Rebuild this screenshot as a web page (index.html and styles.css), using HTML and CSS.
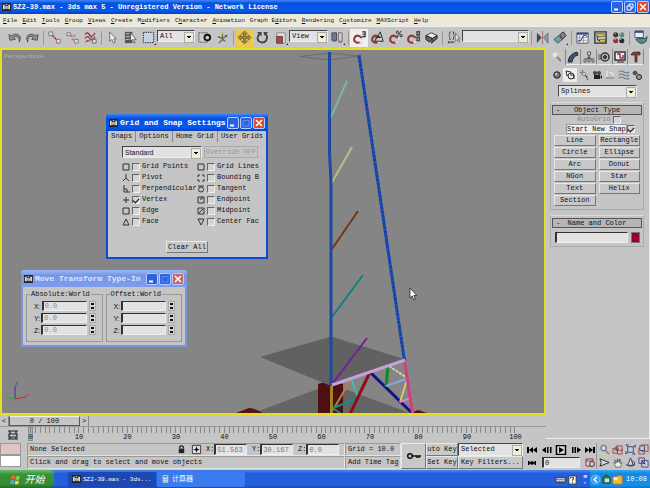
FILE: index.html
```html
<!DOCTYPE html>
<html lang="en">
<head>
  <meta charset="UTF-8" />
  <title>SZ2-39.max - 3ds max 5</title>
  <link rel="stylesheet" href="styles.css">
</head>
<body>
  <svg width="0" height="0" class="defs">
    <symbol id="app" viewBox="0 0 10 9">
      <rect width="10" height="9" fill="#222"/><path d="M1 2h2v5H1zM7 2h2v5H7zM4 1h2v1H4z" fill="#ddd"/><circle cx="5" cy="5" r="1.6" fill="#9ab" stroke="#eee" stroke-width=".6"/>
    </symbol>
    <symbol id="magnet" viewBox="0 0 16 16">
      <path d="M10.500 13L5.500 13.500Q1.500 12.500 2.500 8.500Q4 5 8 6.500L12 9.500" fill="none" stroke="#8c3a38" stroke-width="2.200"/><path d="M8 13.300l2.500-.3M10.500 8.300l1.800 1.400" stroke="#eee" stroke-width="2.400"/>
    </symbol>
    <symbol id="min" viewBox="0 0 10 10"><path d="M2 7.500h4" stroke="#fff" stroke-width="2"/></symbol>
    <symbol id="max" viewBox="0 0 10 10"><path d="M2 2.500h6v5.500H2z" fill="none" stroke="#5c8cf0"/></symbol>
    <symbol id="restore" viewBox="0 0 10 10"><path d="M4 4V2h4v4H6M2 4h4v4H2z" fill="none" stroke="#fff"/></symbol>
    <symbol id="close" viewBox="0 0 10 10"><path d="M2 2l6 6M8 2l-6 6" stroke="#fff" stroke-width="1.500"/></symbol>
  </svg>

  <header class="titlebar">
    <svg class="app-icon"><use href="#app"/></svg>
    <h1>SZ2-39.max - 3ds max 5 - Unregistered Version - Network License</h1>
    <div class="win-buttons">
      <button aria-label="Minimize"><svg><use href="#min"/></svg></button>
      <button aria-label="Restore"><svg><use href="#restore"/></svg></button>
      <button class="close" aria-label="Close"><svg><use href="#close"/></svg></button>
    </div>
  </header>

  <nav class="menubar">
    <button><u>F</u>ile</button>
    <button><u>E</u>dit</button>
    <button><u>T</u>ools</button>
    <button><u>G</u>roup</button>
    <button><u>V</u>iews</button>
    <button><u>C</u>reate</button>
    <button>M<u>o</u>difiers</button>
    <button>C<u>h</u>aracter</button>
    <button><u>A</u>nimation</button>
    <button>Graph E<u>d</u>itors</button>
    <button><u>R</u>endering</button>
    <button>C<u>u</u>stomize</button>
    <button><u>M</u>AXScript</button>
    <button><u>H</u>elp</button>
  </nav>

  <div class="toolbar">
    <button aria-label="Undo"><svg viewBox="0 0 16 16"><path d="M2 5l1 6 6-1-2-2q4-3 6 2v3q3-6-1-8-4-2-7 1z" fill="#8c9088" stroke="#333" stroke-width=".7"/></svg></button>
    <button aria-label="Redo"><svg viewBox="0 0 16 16"><path d="M14 5l-1 6-6-1 2-2Q5 5 3 10v3Q0 7 4 5q4-2 7 1z" fill="#8c9088" stroke="#333" stroke-width=".7"/></svg></button>
    <i class="sep"></i>
    <button aria-label="Link"><svg viewBox="0 0 16 16"><path d="M4 4l8 8" stroke="#b23540" stroke-width="2" stroke-dasharray="2 1"/><path d="M2 2h4v4H2zM10 10h4v4h-4z" fill="#ddd" stroke="#777"/></svg></button>
    <button aria-label="Unlink"><svg viewBox="0 0 16 16"><path d="M6 6l2 1M11 5l-2 2M7 11l2-2" stroke="#c0606a" stroke-width="1.300"/><path d="M2 3h4v3H2zM10 10h4v4h-4z" fill="#ddd" stroke="#777"/></svg></button>
    <button aria-label="Bind"><svg viewBox="0 0 16 16"><path d="M2 5q3-4 5 0t6-2M2 9q3-4 5 0t6-2M3 13q2-3 4-1" fill="none" stroke="#a83844" stroke-width="1.300"/><path d="M4 2l7 9" stroke="#555"/><path d="M10 10h4v4h-4z" fill="#ddd" stroke="#666"/></svg></button>
    <i class="sep"></i>
    <button aria-label="Select"><svg viewBox="0 0 16 16"><path d="M5 2v10l2.500-2L9 14l2-1-1.500-3.500H12z" fill="#eee" stroke="#555" stroke-width=".8"/></svg></button>
    <button aria-label="Select by name"><svg viewBox="0 0 16 16"><path d="M2 2h8v12H2z" fill="#555"/><path d="M3 4h4M3 7h4M3 10h4" stroke="#ccc"/><path d="M8 3v9l2-2 1.500 4 1.500-.5L11.500 10H14z" fill="#eee" stroke="#444" stroke-width=".7"/></svg></button>
    <button aria-label="Region"><svg viewBox="0 0 16 16"><path d="M2.500 2.500h11v11h-11z" fill="#c4d4e2" stroke="#222" stroke-dasharray="1.500 1"/><path d="M14 16h2v-2z" fill="#111"/></svg></button>
    <span class="dd filter"><select aria-label="Selection filter"><option>All</option></select></span>
    <button aria-label="Crossing"><svg viewBox="0 0 16 16"><path d="M2 3h9v10H2z" fill="#ccc" stroke="#222" stroke-dasharray="1 1"/><circle cx="11" cy="8" r="3" fill="#ccc" stroke="#111" stroke-width="2"/></svg></button>
    <button aria-label="Manipulate"><svg viewBox="0 0 16 16"><path d="M8 3v7l-4 4M3 7l5 2 5-3M8 10l3 2" fill="none" stroke="#5c6450" stroke-width="1.300"/><circle cx="8.500" cy="3.500" r="1.300" fill="#c8c860"/><circle cx="12" cy="6" r="1" fill="#444"/></svg></button>
    <i class="sep"></i>
    <button class="active" aria-label="Move"><svg viewBox="0 0 16 16"><path d="M8 1l3 3H9v3h3V5l3 3-3 3V9H9v3h2l-3 3-3-3h2V9H4v2L1 8l3-3v2h3V4H5z" fill="#a09058" stroke="#5c4c20" stroke-width=".7"/></svg></button>
    <button aria-label="Rotate"><svg viewBox="0 0 16 16"><path d="M5 4Q1 8 4 12q5 3 8-1 2-5-1-7" fill="none" stroke="#444" stroke-width="2"/><path d="M2 2h5v5zM9 2h5l-4 4z" fill="#444"/></svg></button>
    <button aria-label="Scale"><svg viewBox="0 0 16 16"><path d="M4 3h9v11H4z" fill="#ddd" stroke="#888"/><path d="M4 7h6v7H4z" fill="#a84850" stroke="#633"/><path d="M14 16h2v-2z" fill="#111"/></svg></button>
    <span class="dd coord"><select aria-label="Coordinate system"><option>View</option></select></span>
    <button aria-label="Pivot"><svg viewBox="0 0 16 16"><path d="M2 3h5v8H2z" fill="#6c7c98" stroke="#445"/><path d="M9 3h4v9H9z" fill="#ccc" stroke="#767"/><path d="M3 12h4M9 13h4" stroke="#a55"/><path d="M14 16h2v-2z" fill="#111"/></svg></button>
    <i class="sep"></i>
    <button class="pressed" aria-label="Snap"><svg viewBox="0 0 16 16"><use href="#magnet" width="16" height="16"/><path d="M11 2h3v5h-3M11 4.500h3" fill="none" stroke="#222" stroke-width="1.200"/></svg></button>
    <button aria-label="Angle snap"><svg viewBox="0 0 16 16"><use href="#magnet" width="16" height="16"/><path d="M5 12L11 2l3 10zM5 9q3-3 7-1" fill="none" stroke="#222"/></svg></button>
    <button aria-label="Percent snap"><svg viewBox="0 0 16 16"><use href="#magnet" width="16" height="16"/><path d="M14 1l-4 6" stroke="#222"/><circle cx="10" cy="2.500" r="1.200" fill="none" stroke="#222"/><circle cx="14" cy="6" r="1.200" fill="none" stroke="#222"/></svg></button>
    <button aria-label="Spinner snap"><svg viewBox="0 0 16 16"><use href="#magnet" width="16" height="16"/><path d="M11 1h4v5h-4zM11 7h4v5h-4z" fill="#444"/><path d="M12 4l1-2 1 2zM12 9l1 2 1-2z" fill="#ddd"/></svg></button>
    <button aria-label="Override"><svg viewBox="0 0 16 16"><path d="M2 6l6-3 6 3-5 3z" fill="#eee" stroke="#333"/><path d="M2 6v4l4 3 3-4zM9 9l5-3v3l-6 5z" fill="#666" stroke="#222"/></svg></button>
    <i class="sep"></i>
    <button aria-label="Named sets"><svg viewBox="0 0 16 16"><path d="M5 2H4v3L3 6l1 1v3h1M7 2h1v3l1 1-1 1v3H7" fill="none" stroke="#444"/><path d="M2 13h7" stroke="#444" stroke-width="2" stroke-dasharray="2 1"/><path d="M10 3v9l2-2 1.500 3 1-.5L13 9h2z" fill="#ddd" stroke="#555" stroke-width=".7"/></svg></button>
    <span class="dd sets"><select aria-label="Named selection sets"><option></option></select></span>
    <i class="sep"></i>
    <button aria-label="Mirror"><svg viewBox="0 0 16 16"><path d="M2 3l5 5-5 6z" fill="#3e4a5c"/><path d="M14 3L9 8l5 6z" fill="#7aa0a8" stroke="#556" stroke-width=".6"/><path d="M8 1v14" stroke="#a66"/></svg></button>
    <button aria-label="Align"><svg viewBox="0 0 16 16"><path d="M1 10l5-4 4 4-5 4z" fill="#70a0a4" stroke="#455"/><path d="M7 5l4-3 3 4-4 4z" fill="#7c8088" stroke="#334"/><path d="M14 16h2v-2z" fill="#111"/></svg></button>
    <i class="sep"></i>
    <button aria-label="Curve editor"><svg viewBox="0 0 16 16"><path d="M2 3h12v11H2z" fill="#eee" stroke="#557"/><path d="M2 4h12" stroke="#34488c" stroke-width="2"/><path d="M5 5v9M9 5v9M3 8h10M3 11h10" stroke="#88a" stroke-width=".7"/><path d="M3 12q4 0 5-4t5-1" fill="none" stroke="#334"/></svg></button>
    <button aria-label="Schematic"><svg viewBox="0 0 16 16"><path d="M2 2h12v12H2z" fill="#ccc" stroke="#333" stroke-width="1.500"/><path d="M4 4h8v3H4zM7 10h6v3H7z" fill="#e0c840" stroke="#443" stroke-width=".7"/><path d="M5 7v4h2" fill="none" stroke="#222"/></svg></button>
    <button aria-label="Materials"><svg viewBox="0 0 16 16"><circle cx="5" cy="5" r="2.700" fill="#323638"/><circle cx="11.500" cy="5" r="2.700" fill="#5a8482"/><circle cx="5" cy="11.500" r="2.700" fill="#933338"/><circle cx="11.500" cy="11.500" r="2.700" fill="#252a30"/><path d="M4 4h1M10 4h1M4 10h1M10 10h1" stroke="#fff"/></svg></button>
    <i class="sep"></i>
    <button aria-label="Render"><svg viewBox="0 0 16 16"><path d="M2 1h9v7H2z" fill="#eee" stroke="#557"/><path d="M2 2h9" stroke="#34488c" stroke-width="2"/><path d="M5 9h8l2-2-1 5q-4 4-8 1l-3-3z" fill="#4c9490" stroke="#245"/></svg></button>
  </div>

  <main class="workspace">
    <div class="left">
      <section class="viewport">
        <svg class="scene" viewBox="0 48 546 367" preserveAspectRatio="none">
          <!-- ground planes -->
          <path d="M253 413L331 384 410 413z" fill="#646464"/>
          <path d="M236 413l13-5q8 1 14 5zM411 413l7-3 9 3z" fill="#581014"/>
          <path d="M318 384l14-4 11 4v29h-25z" fill="#4c1012"/>
          <path d="M260 357L331 336.500 404 359 331 386z" fill="#616161"/>
          <path d="M300 56.500l30-3.500 29 3-29 4z" fill="none" stroke="#666" stroke-width=".8"/>
          <g fill="none" stroke-width="2">
            <path d="M347 81l-16 36" stroke="#7db5a8"/>
            <path d="M352 147l-21 37" stroke="#bcbc80"/>
            <path d="M358 211l-26 38" stroke="#783410"/>
            <path d="M363 275l-31 42" stroke="#128080"/>
            <path d="M367 338l-34 45" stroke="#7a1c98"/>
            <path d="M329.500 52v100l1.500 30v203" stroke="#1c4aa0" stroke-width="3"/>
            <path d="M331.500 386v27" stroke="#a08420" stroke-width="3"/>
            <path d="M359 55l45.500 306" stroke="#1440ac" stroke-width="3"/>
            <path d="M359 55l45.500 306" stroke="#3060b0" stroke-dasharray="1 3"/>
            <path d="M333 410l18-31" stroke="#b88048"/>
            <path d="M351 378l7 20" stroke="#44bca8"/>
            <path d="M333 408l25-10M334 409l6 4" stroke="#128c88"/>
            <path d="M370 372l-20 42" stroke="#8a1018" stroke-width="3"/>
            <path d="M370 372l42 41" stroke="#101088" stroke-width="3"/>
            <path d="M388 366l-2 21" stroke="#108a28" stroke-width="3"/>
            <path d="M389 366l18 12" stroke="#d8d4a8" stroke-dasharray="3 1"/>
            <path d="M386 386l20-7" stroke="#80a8dc"/>
            <path d="M407 380l-7 22" stroke="#d8cc60"/>
            <path d="M400 402l11-4" stroke="#d888c8"/>
            <path d="M404.500 361l8 52" stroke="#d04080" stroke-width="3"/>
            <path d="M332 385l73-25" stroke="#c8a0d8" stroke-width="3"/>
          </g>
          <!-- axis tripod -->
          <path d="M15 399V386" stroke="#3434b0"/><path d="M15 399l11-2" stroke="#b83030"/><path d="M15 399l-6-1" stroke="#40a040"/>
          <g class="axis"><text x="15" y="385" fill="#3434b0">z</text><text x="26" y="397" fill="#b83030">x</text><text x="6" y="399" fill="#40a040">y</text></g>
          <path d="M410 288v10l2.200-2 1.600 4 1.700-.8-1.700-3.700h3z" fill="#fff" stroke="#222" stroke-width=".8"/>
        </svg>
        <span class="view-name">Perspective</span>

        <section class="dialog snaps">
          <header>
            <svg class="app-icon"><use href="#app"/></svg>
            <h2>Grid and Snap Settings</h2>
            <div class="win-buttons">
              <button aria-label="Minimize"><svg><use href="#min"/></svg></button>
              <button aria-label="Maximize"><svg><use href="#max"/></svg></button>
              <button class="close" aria-label="Close"><svg><use href="#close"/></svg></button>
            </div>
          </header>
          <div class="tabs">
            <button>Snaps</button><button>Options</button><button>Home Grid</button><button>User Grids</button>
          </div>
          <div class="snap-body">
            <div class="snap-top">
              <span class="dd"><select aria-label="Snap type"><option>Standard</option></select></span>
              <button class="override" disabled>Override OFF</button>
            </div>
            <div class="snap-grid">
              <label><svg viewBox="0 0 8 8"><path d="M1 1h6v6H1z"/></svg><input type="checkbox"><span>Grid Points</span></label>
              <label><svg viewBox="0 0 8 8"><path d="M1 1h6v6H1z"/></svg><input type="checkbox"><span>Grid Lines</span></label>
              <label><svg viewBox="0 0 8 8"><path d="M4 0v4L1 7M4 4l3 3"/></svg><input type="checkbox"><span>Pivot</span></label>
              <label><svg viewBox="0 0 8 8"><path d="M3 1H1v2M5 1h2v2M1 5v2h2M7 5v2H5"/></svg><input type="checkbox"><span>Bounding B</span></label>
              <label><svg viewBox="0 0 8 8"><path d="M2 0v7h6M2 4h3v3"/></svg><input type="checkbox"><span>Perpendicular</span></label>
              <label><svg viewBox="0 0 8 8"><path d="M1 1h6"/><circle cx="4" cy="4.500" r="2.500"/></svg><input type="checkbox"><span>Tangent</span></label>
              <label><svg viewBox="0 0 8 8"><path d="M4 1v6M1 4h6"/></svg><input type="checkbox" checked><span>Vertex</span></label>
              <label><svg viewBox="0 0 8 8"><path d="M1 1h6v6H1zM4 4V2h2"/></svg><input type="checkbox"><span>Endpoint</span></label>
              <label><svg viewBox="0 0 8 8"><path d="M1 1h6v6H1z"/></svg><input type="checkbox"><span>Edge</span></label>
              <label><svg viewBox="0 0 8 8"><path d="M1 1h6v6H1zM2 6l4-4"/></svg><input type="checkbox"><span>Midpoint</span></label>
              <label><svg viewBox="0 0 8 8"><path d="M4 1l3 6H1z"/></svg><input type="checkbox"><span>Face</span></label>
              <label><svg viewBox="0 0 8 8"><path d="M4 7L1 1h6z"/></svg><input type="checkbox"><span>Center Fac</span></label>
            </div>
            <button class="btn clear">Clear All</button>
          </div>
        </section>

        <section class="dialog inactive typein">
          <header>
            <svg class="app-icon"><use href="#app"/></svg>
            <h2>Move Transform Type-In</h2>
            <div class="win-buttons">
              <button aria-label="Minimize"><svg><use href="#min"/></svg></button>
              <button aria-label="Maximize"><svg><use href="#max"/></svg></button>
              <button class="close" aria-label="Close"><svg><use href="#close"/></svg></button>
            </div>
          </header>
          <div class="sets-row">
            <fieldset>
              <legend>Absolute:World</legend>
              <label>X:<input type="text" value="0.0"><i class="spin"></i></label>
              <label>Y:<input type="text" value="0.0"><i class="spin"></i></label>
              <label>Z:<input type="text" value="0.0"><i class="spin"></i></label>
            </fieldset>
            <fieldset>
              <legend>Offset:World</legend>
              <label>X:<input type="text"><i class="spin"></i></label>
              <label>Y:<input type="text"><i class="spin"></i></label>
              <label>Z:<input type="text"><i class="spin"></i></label>
            </fieldset>
          </div>
        </section>
      </section>

      <div class="time-slider">
        <button class="step">&lt;</button><button class="thumb">0 / 100</button><button class="step">&gt;</button>
      </div>
      <div class="trackbar">
        <button class="curve" aria-label="Open mini curve editor"><svg viewBox="0 0 12 12"><path d="M1 2h10M1 10h10M2 5h8v3H2zM3 2v3M9 2v3M3 8v2M9 8v2" fill="none" stroke="#222" stroke-width="1.200"/></svg></button>
        <div class="track">
          <i class="frame"></i>
          <div class="ticks" id="ticks"></div>
          <div class="labels" id="labels"></div>
        </div>
      </div>
    </div>

    <aside class="panel">
      <div class="panel-tabs">
        <button class="on" aria-label="Create"><svg viewBox="0 0 12 12"><path d="M5 5l5 5" stroke="#888" stroke-width="2"/><path d="M4 1v6M1 4h6M2 2l4 4M6 2L2 6" stroke="#f4f0d0"/></svg></button>
        <button aria-label="Modify"><svg viewBox="0 0 12 12"><path d="M1 11Q2 3 10 1l1 3Q6 5 5 11z" fill="#3c5674" stroke="#223"/></svg></button>
        <button aria-label="Hierarchy"><svg viewBox="0 0 12 12"><path d="M6 3v3L2 9M6 6l4 3M6 6v3" stroke="#444" fill="none"/><path d="M4.500 1h3v3h-3zM1 8h2v3H1zM5 8h2v3H5zM9 8h2v3H9z" fill="#ddd" stroke="#444" stroke-width=".8"/></svg></button>
        <button aria-label="Motion"><svg viewBox="0 0 12 12"><circle cx="7" cy="6" r="4" fill="#bbb" stroke="#333" stroke-width="1.500"/><circle cx="7" cy="6" r="1.500" fill="#933" stroke="#222"/><path d="M0 4h3M0 6h2M0 8h3" stroke="#555"/></svg></button>
        <button aria-label="Display"><svg viewBox="0 0 12 12"><path d="M1 1h10v8H1z" fill="#eee" stroke="#334" stroke-width="1.500"/><path d="M3 3h3v4M6 7h3V4" fill="none" stroke="#a23050" stroke-width="1.500"/><path d="M3 11h7" stroke="#333"/></svg></button>
        <button aria-label="Utilities"><svg viewBox="0 0 12 12"><path d="M1 4q1-3 4-3h5v3H8L7 3v8H5V4z" fill="#8a3a34" stroke="#422" stroke-width=".7"/></svg></button>
      </div>
      <div class="cats">
        <button aria-label="Geometry"><svg viewBox="0 0 12 12"><circle cx="6" cy="6" r="3.300" fill="#777" stroke="#222"/><circle cx="5" cy="5" r="1" fill="#ddd"/></svg></button>
        <button class="on" aria-label="Shapes"><svg viewBox="0 0 12 12"><circle cx="7" cy="7" r="3" fill="none" stroke="#222"/><path d="M2 2l5 1-4 4zM6 6h4v4" fill="none" stroke="#333"/></svg></button>
        <button aria-label="Lights"><svg viewBox="0 0 12 12"><path d="M2 3l4 3M4 1l2 4M7 6l3 5M6 6l4 2" stroke="#555"/><circle cx="6" cy="5" r="1.700" fill="#e8e4b0" stroke="#555" stroke-width=".6"/></svg></button>
        <button aria-label="Cameras"><svg viewBox="0 0 12 12"><path d="M3 6h6v4H3zM9 8l2-2v4z" fill="#222"/><circle cx="4" cy="4" r="2" fill="#444"/><circle cx="8" cy="4" r="2" fill="#444"/></svg></button>
        <button aria-label="Helpers"><svg viewBox="0 0 12 12"><path d="M3 2v7h7M5 4h4v3" fill="none" stroke="#eee"/><path d="M2 9h8" stroke="#666"/></svg></button>
        <button aria-label="Space warps"><svg viewBox="0 0 12 12"><path d="M1 3q2-2 5 0t5 0M1 6q2-2 5 0t5 0M1 9q2-2 5 0t5 0" fill="none" stroke="#667c90" stroke-width="1.200"/></svg></button>
        <button aria-label="Systems"><svg viewBox="0 0 12 12"><circle cx="4" cy="4" r="2" fill="#555" stroke="#222" stroke-dasharray="1 1"/><circle cx="8" cy="8" r="2.500" fill="#999" stroke="#222"/></svg></button>
      </div>
      <span class="dd kind"><select aria-label="Object category"><option>Splines</option></select></span>

      <section class="rollout">
        <h3><span>-</span>Object Type</h3>
        <label class="autogrid"><span>AutoGrid</span><input type="checkbox" disabled></label>
        <label class="newshape"><span>Start New Shap</span><input type="checkbox" checked></label>
        <div class="types">
          <button class="btn">Line</button><button class="btn">Rectangle</button>
          <button class="btn">Circle</button><button class="btn">Ellipse</button>
          <button class="btn">Arc</button><button class="btn">Donut</button>
          <button class="btn">NGon</button><button class="btn">Star</button>
          <button class="btn">Text</button><button class="btn">Helix</button>
          <button class="btn">Section</button>
        </div>
      </section>
      <section class="rollout">
        <h3><span>-</span>Name and Color</h3>
        <div class="name-row">
          <input type="text" aria-label="Object name"><button class="swatch" aria-label="Object color"></button>
        </div>
      </section>
    </aside>
  </main>

  <footer class="status">
    <div class="listener"><i class="pink"></i><i class="white"></i></div>
    <div class="prompt">
      <div class="line coords">
        <span class="selected">None Selected</span>
        <svg class="ico" viewBox="0 0 12 12"><path d="M3 5h6v5H3z" fill="#222"/><path d="M4 5V3q2-2 4 0v2" fill="none" stroke="#222" stroke-width="1.300"/></svg>
        <svg class="ico" viewBox="0 0 12 12"><path d="M1.500 1.500h9v9h-9z" fill="#ddd" stroke="#333"/><path d="M6 3v6M3 6h6" stroke="#222"/><circle cx="6" cy="6" r="1.500"/></svg>
        <label>X:<input type="text" value="51.563"></label>
        <label>Y:<input type="text" value="30.167"></label>
        <label>Z:<input type="text" value="0.0"></label>
      </div>
      <div class="line">Click and drag to select and move objects</div>
    </div>
    <div class="grid-info">
      <div class="line">Grid = 10.0</div>
      <div class="line">Add Time Tag</div>
    </div>
    <button class="btn key" aria-label="Set keys"><svg viewBox="0 0 16 10"><circle cx="4" cy="5" r="2.300" fill="none" stroke="#111" stroke-width="1.500"/><path d="M6 5h9M11 5v2M13 5v2" stroke="#111" stroke-width="1.500"/></svg></button>
    <div class="key-mode">
      <button class="btn">uto Key</button>
      <button class="btn">Set Key</button>
    </div>
    <div class="key-set">
      <span class="dd"><select aria-label="Key selection"><option>Selected</option></select></span>
      <button class="btn">Key Filters...</button>
    </div>
    <div class="play">
      <div>
        <button aria-label="Go to start"><svg viewBox="0 0 12 10"><path d="M1 2h2v6H1zM3 5l4-3v6zM7 5l4-3v6z"/></svg></button>
        <button aria-label="Previous frame"><svg viewBox="0 0 12 10"><path d="M1 5l4-3v6zM6 2h1.500v6H6zM9 2h1.500v6H9z"/></svg></button>
        <button aria-label="Play"><svg viewBox="0 0 12 10"><path d="M1.500 .5h9v9h-9z" fill="#ddd" stroke="#000" stroke-width="1.500"/><path d="M4 2l5 3-5 3z"/></svg></button>
        <button aria-label="Next frame"><svg viewBox="0 0 12 10"><path d="M11 5L7 2v6zM2 2h1.500v6H2zM4.500 2H6v6H4.500z"/></svg></button>
        <button aria-label="Go to end"><svg viewBox="0 0 12 10"><path d="M9 2h2v6H9zM9 5L5 2v6zM5 5L1 2v6z"/></svg></button>
      </div>
      <div>
        <button aria-label="Key mode"><svg viewBox="0 0 12 10"><path d="M2 3h1.500v4H2zM8.500 3H10v4H8.500zM3 5l3-2v4zM9 5L6 3v4z"/></svg></button>
        <input type="text" value="0" aria-label="Frame">
        <button aria-label="Time configuration"><svg viewBox="0 0 12 10"><path d="M2 1h7v7H2z" fill="#ddd" stroke="#833"/><path d="M2 3h7" stroke="#833"/><circle cx="8" cy="6" r="2.500" fill="#ccc" stroke="#533"/></svg></button>
      </div>
    </div>
    <div class="nav">
      <button aria-label="Zoom"><svg viewBox="0 0 12 12"><circle cx="5" cy="4.500" r="3" fill="#c8d8f4" stroke="#447"/><path d="M7 7l4 4" stroke="#a84" stroke-width="1.800"/></svg></button>
      <button aria-label="Zoom all"><svg viewBox="0 0 12 12"><path d="M1 5h5v5H1zM5 2h6v5H5zM6 7v4h5V5" fill="none" stroke="#a24050"/><circle cx="5" cy="5" r="2" fill="none" stroke="#555"/></svg></button>
      <button aria-label="Zoom extents"><svg viewBox="0 0 12 12"><path d="M3 3h6v6H3z" fill="#ccd" stroke="#446"/><path d="M1 1l2 2M11 1L9 3M1 11l2-2M11 11L9 9M1 1h3M11 1v3M1 11V8M11 11H8" stroke="#338"/></svg></button>
      <button aria-label="Zoom extents all"><svg viewBox="0 0 12 12"><path d="M1 5h6v6H1zM4 1h7v7H4z" fill="none" stroke="#a24050"/><path d="M2 2h5v5H2z" fill="#ccd" stroke="#446"/></svg></button>
      <button aria-label="Field of view"><svg viewBox="0 0 12 12"><path d="M1 2l10 4-10 4q3-4 0-8z" fill="#ddd" stroke="#222"/></svg></button>
      <button aria-label="Pan"><svg viewBox="0 0 12 12"><path d="M2 6l2 5h5l2-5-2 1V3L8 6V2L6 6V2L5 6 3 3l1 4z" fill="#eee" stroke="#555" stroke-width=".8"/></svg></button>
      <button aria-label="Arc rotate"><svg viewBox="0 0 12 12"><path d="M6 1l3 8H3z" fill="#ddd" stroke="#335"/><path d="M1 8q5 4 10 0M8 4q4 2 2 5" fill="none" stroke="#335"/></svg></button>
      <button aria-label="Maximize viewport"><svg viewBox="0 0 12 12"><path d="M1 1h6v6H1zM4 4h7v7H4z" fill="#ccd" stroke="#448"/><path d="M4 4l4 4" stroke="#224"/></svg></button>
    </div>
  </footer>

  <div class="taskbar">
    <button class="start"><svg viewBox="0 0 12 12"><path d="M2 2q2-1 4 0L5 6Q3 5 1 6z" fill="#f06030"/><path d="M7 2q2 1 4 0l-1 4q-2 1-4 0z" fill="#80d040"/><path d="M1 7q2-1 4 0l-1 4Q2 10 0 11z" fill="#60a0ff"/><path d="M6 7q2 1 4 0l-1 4q-2 1-4 0z" fill="#ffd040"/></svg>开始</button>
    <button class="task current"><svg class="app-icon"><use href="#app"/></svg>SZ2-39.max - 3ds...</button>
    <button class="task"><svg class="app-icon" viewBox="0 0 10 9"><path d="M2 0h6v9H2z" fill="#d8e8ff" stroke="#7898d0"/><path d="M3 2h4" stroke="#4870b8" stroke-width="1.500"/><path d="M3 5h4M3 7h4" stroke="#6888c0" stroke-dasharray="1 .5"/></svg>计算器</button>
    <div class="lang">
      <svg viewBox="0 0 12 12"><path d="M1 4h10v5H1z" fill="#ddd" stroke="#333"/><path d="M2 6h8M3 8h6" stroke="#444" stroke-dasharray="1 .6"/></svg>
      <svg viewBox="0 0 12 12"><path d="M2 2h8v9H2z" fill="#fff8d8" stroke="#333"/><path d="M4 5V3.500h3V6H6v1.500M6 8.500V10" fill="none" stroke="#333"/></svg>
      <svg viewBox="0 0 12 12"><path d="M5 1h4v3H5zM5 9l1.500 2L8 9z" fill="#b8d0ff"/></svg>
    </div>
    <div class="tray">
      <svg viewBox="0 0 12 12"><circle cx="6" cy="6" r="5" fill="#3c9cf4" stroke="#8cd0ff" stroke-width=".7"/><path d="M7.500 3L4.500 6l3 3" fill="none" stroke="#fff" stroke-width="1.500"/></svg>
      <svg viewBox="0 0 12 12"><path d="M2 4l4-3 4 3v6H2z" fill="#347848" stroke="#143"/><path d="M4 5h5v4H4z" fill="#c8e8c0"/></svg>
      <svg viewBox="0 0 12 12"><path d="M1 3h4l1-1h5v9H1z" fill="#f8b838" stroke="#c87820"/><path d="M2 4h4v2H2z" fill="#fff"/></svg>
      <span>10:08</span>
    </div>
  </div>

  <script>
    const ticks = document.getElementById('ticks');
    const labels = document.getElementById('labels');

    for (let i = 0; i <= 100; i++) {
      ticks.appendChild(document.createElement('i'));
      if (i % 10 === 0) {
        const label = document.createElement('span');
        label.textContent = i;
        labels.appendChild(label);
      }
    }
  </script>
</body>
</html>
```

FILE: styles.css
```css
* {
  box-sizing: border-box;
}

body {
  margin: 0;
  min-height: 100vh;
  display: flex;
  flex-direction: column;
  background: #c5c5c5;
  color: #111;
  font: 7px/9px "Liberation Mono", "Noto Sans CJK SC", monospace;
}

.defs {
  position: absolute;
}

button, input, select {
  margin: 0;
  padding: 0;
  border: 0;
  border-radius: 0;
  background: none;
  color: inherit;
  font: inherit;
  white-space: nowrap;
}

button {
  display: flex;
  align-items: center;
  justify-content: center;
}

svg {
  display: block;
  flex: none;
}

h1, h2, h3 {
  margin: 0;
  font-size: 7px;
  line-height: 9px;
}

input[type="text"] {
  min-width: 0;
  height: 11px;
  padding: 0 1px;
  border: 1px solid #eee;
  border-top-color: #333;
  border-left: 2px solid #333;
  background: #e2e2e2;
}

input[type="checkbox"] {
  appearance: none;
  flex: none;
  width: 8px;
  height: 8px;
  border: 1px solid #eee;
  border-top-color: #666;
  border-left-color: #666;
  background: #d4d4d4;
}

input[type="checkbox"]:checked::after {
  content: "";
  display: block;
  width: 5px;
  height: 3px;
  margin-top: 1px;
  border: solid #111;
  border-width: 0 0 1px 1px;
  transform: rotate(-45deg);
}

/* drop-downs */
.dd {
  position: relative;
  display: block;
  flex: none;
  height: 12px;
}

.dd select {
  appearance: none;
  width: 100%;
  height: 100%;
  padding: 0 9px 0 2px;
  border: 1px solid #eee;
  border-top-color: #444;
  border-left-color: #444;
  background: #e2e2e2;
}

.dd::after {
  content: "";
  position: absolute;
  top: 2px;
  right: 1px;
  width: 8px;
  height: 9px;
  border: 1px solid #aaa;
  background: linear-gradient(#111, #111) center 3px / 4px 1px no-repeat,
    linear-gradient(#111, #111) center 4px / 2px 1px no-repeat, #f0ecd8;
}

.btn {
  height: 11px;
  border: 1px solid #777;
  border-top-color: #e8e8e8;
  border-left-color: #e8e8e8;
  background: #c8c8c8;
}

/* title bars */
.titlebar, .dialog header {
  display: flex;
  align-items: center;
  color: #fff;
  background: linear-gradient(#3a86f8, #0850dc 25%, #0658ee 75%, #0344c0);
}

.titlebar {
  height: 14px;
  padding: 0 1px 0 2px;
}

.app-icon {
  width: 9px;
  height: 8px;
  margin-right: 2px;
}

.win-buttons {
  display: flex;
  gap: 1px;
  margin-left: auto;
}

.win-buttons button {
  width: 12px;
  height: 12px;
  border: 1px solid #b4ccff;
  border-radius: 2px;
  background: #2c62e0;
}

.win-buttons svg {
  width: 10px;
  height: 10px;
}

.win-buttons .close {
  background: #dc4c28;
}

.menubar {
  display: flex;
  gap: 5px;
  height: 12px;
  padding: 0 3px;
  background: #ece9d8;
  font-size: 6px;
}

.menubar button {
  flex: none;
}

.menubar u {
  text-underline-offset: 1px;
  text-decoration-thickness: 1px;
}

/* main toolbar */
.toolbar {
  display: flex;
  align-items: center;
  height: 22px;
  padding-left: 5px;
  border-top: 1px solid #eee;
}

.toolbar button {
  flex: none;
  width: 18px;
  height: 18px;
}

.toolbar button > svg {
  width: 15px;
  height: 15px;
}

.toolbar .dd {
  margin-bottom: 3px;
}

.toolbar .active {
  background: #eec74c;
}

.toolbar .pressed {
  background: #f2eeee;
}

.sep {
  flex: none;
  width: 1px;
  height: 14px;
  margin: 0 1px 0 2px;
  background: #999;
}

.filter {
  width: 38px;
}

.coord {
  width: 39px;
}

.sets {
  width: 67px;
}

.workspace {
  flex: 1;
  display: flex;
}

.left {
  flex: 1;
  display: flex;
  flex-direction: column;
}

.viewport {
  position: relative;
  flex: 1;
  background: #858585;
  overflow: hidden;
}

.viewport::after {
  content: "";
  position: absolute;
  inset: 0;
  border: 2px solid #e4e020;
  pointer-events: none;
}

.scene {
  position: absolute;
  inset: 0;
  width: 100%;
  height: 100%;
}

.axis {
  font-size: 5px;
}

.view-name {
  position: absolute;
  top: 4px;
  left: 4px;
  font-size: 6px;
  color: #b4b4b4;
}

/* floating dialogs */
.dialog {
  position: absolute;
  border: 2px solid #0a4ad8;
  border-top: 0;
  border-radius: 3px 3px 0 0;
  background: #c5c5c5;
}

.dialog header {
  height: 17px;
  margin: 0 -2px;
  padding: 0 3px;
  border-radius: 3px 3px 0 0;
}

.dialog header h2 {
  font-size: 8px;
  white-space: nowrap;
}

.inactive {
  border-color: #7a96e0;
}

.inactive header {
  background: linear-gradient(#9cb8f4, #7898e4 30%, #7c9cec);
  color: #dce6fc;
}

.inactive .close {
  background: #cc6464;
}

.snaps {
  top: 66px;
  left: 106px;
  width: 162px;
}

.typein {
  top: 222px;
  left: 21px;
  width: 166px;
}

.tabs {
  display: flex;
  height: 11px;
}

.tabs button {
  flex: auto;
  border-right: 1px solid #888;
}

.tabs button:last-child {
  border-right: 0;
}

.snap-body {
  padding: 4px 8px 4px 14px;
}

.snap-top {
  display: flex;
  gap: 2px;
}

.snap-top .dd {
  width: 80px;
}

.snap-top select {
  font-family: "Liberation Sans", sans-serif;
}

.override {
  width: 54px;
  height: 12px;
  border: 1px solid #aaa;
  color: #999;
}

.snap-grid {
  display: grid;
  grid-template-columns: 75px 1fr;
  margin-top: 3px;
}

.snap-grid label {
  display: flex;
  align-items: center;
  gap: 2px;
  height: 11px;
  white-space: nowrap;
}

.snap-grid svg {
  width: 8px;
  height: 8px;
  fill: none;
  stroke: #333;
}

.clear {
  width: 42px;
  height: 12px;
  margin: 14px 0 0 44px;
}

.sets-row {
  display: flex;
  gap: 3px;
  padding: 3px;
}

fieldset {
  flex: 1;
  min-width: 0;
  margin: 0;
  padding: 1px 6px 5px 7px;
  border: 1px solid #999;
}

legend {
  padding: 0 1px;
  margin-left: -4px;
}

fieldset label {
  display: flex;
  align-items: center;
  height: 12px;
  font-family: "Liberation Sans", sans-serif;
}

fieldset input[type="text"] {
  flex: 1;
  height: 10px;
  margin-left: 1px;
  color: #888;
  font-family: "Liberation Mono", monospace;
}

.spin {
  width: 7px;
  height: 10px;
  margin-left: 2px;
  border: 1px solid #aaa;
  background: linear-gradient(#111, #111) center 1px / 3px 2px no-repeat,
    linear-gradient(#111, #111) center 5px / 3px 2px no-repeat, #d4d4d4;
}

/* time slider and track bar */
.time-slider {
  display: flex;
  height: 11px;
  padding-top: 1px;
}

.step {
  width: 9px;
  border-right: 1px solid #888;
}

.thumb {
  width: 71px;
  border: 1px solid #555;
  border-top-color: #eee;
}

.trackbar {
  display: flex;
  height: 17px;
  border-top: 1px solid #999;
}

.curve {
  width: 25px;
}

.curve svg {
  width: 12px;
  height: 12px;
}

.track {
  position: relative;
  flex: 1;
  padding: 0 30px 0 5px;
}

.frame {
  position: absolute;
  left: 3px;
  top: 0;
  width: 5px;
  height: 14px;
  border: 1px solid #7f8d9c;
  background: #a4b4c4;
}

.ticks, .labels {
  position: relative;
  display: flex;
  justify-content: space-between;
}

.ticks i {
  width: 1px;
  height: 6px;
  background: #888;
}

.labels span {
  display: flex;
  justify-content: center;
  width: 1px;
}

/* command panel */
.panel {
  width: 104px;
  margin-bottom: 4px;
  padding: 1px 5px 0 4px;
  border-bottom: 1px solid #eee;
  border-right: 1px solid #eee;
}

.panel svg {
  width: 12px;
  height: 12px;
}

.panel-tabs {
  display: flex;
  height: 16px;
}

.panel-tabs button {
  flex: 1;
  border-right: 1px solid #888;
  border-bottom: 1px solid #eee;
}

.panel-tabs .on {
  border-bottom: 0;
}

.cats {
  display: flex;
  height: 14px;
  margin: 3px 0;
}

.cats button {
  flex: 1;
}

.cats .on {
  background: #eee;
}

.kind {
  width: 79px;
  margin-left: 8px;
}

.rollout {
  margin-top: 5px;
  padding: 2px 1px 3px;
  border: 1px solid #aaa;
  border-top-color: #ddd;
}

.rollout h3 {
  position: relative;
  height: 10px;
  border: 1px solid #555;
  background: #b6b6b6;
  font-weight: normal;
  line-height: 8px;
  text-align: center;
}

.rollout h3 span {
  position: absolute;
  left: 3px;
}

.autogrid, .newshape {
  display: flex;
  align-items: center;
  height: 9px;
}

.autogrid {
  gap: 2px;
  padding-left: 25px;
  color: #888;
}

.newshape {
  padding-left: 14px;
}

.newshape span {
  white-space: nowrap;
  border: 1px solid #999;
  background: #eee;
  line-height: 8px;
}

.types {
  display: grid;
  grid-template-columns: 1fr 1fr;
  gap: 1px 3px;
  padding: 2px 2px 0;
}

.name-row {
  display: flex;
  gap: 3px;
  padding: 4px 2px 0 3px;
}

.name-row input {
  flex: 1;
}

.swatch {
  width: 9px;
  height: 11px;
  background: #930038;
  border: 1px solid #777;
}

/* status bar */
.status {
  display: flex;
  height: 27px;
  padding-bottom: 1px;
}

.listener {
  width: 21px;
  margin-right: 6px;
}

.listener i {
  display: block;
  height: 12px;
  border: 1px solid #999;
}

.pink {
  background: #e0c4c4;
}

.white {
  background: #fff;
}

.prompt {
  flex: 1;
}

.line {
  display: flex;
  align-items: center;
  height: 13px;
  padding-left: 2px;
  border: 1px solid #e4e4e4;
  border-top-color: #999;
  border-left-color: #999;
  white-space: nowrap;
}

.selected {
  flex: 1;
}

.ico {
  width: 11px;
  height: 11px;
  margin-right: 4px;
}

.coords label {
  display: flex;
  align-items: center;
  width: 41px;
  margin-right: 5px;
}

.coords input {
  flex: 1;
  color: #777;
}

.grid-info {
  width: 56px;
}

.key {
  width: 25px;
  height: 26px;
}

.key svg {
  width: 16px;
  height: 10px;
}

.key-mode {
  width: 32px;
}

.key-mode .btn, .key-set .btn {
  width: 100%;
  height: 13px;
}

.key-set {
  width: 65px;
}

.key-set .dd {
  height: 13px;
}

.play {
  width: 74px;
  padding-left: 3px;
  border-right: 1px solid #999;
}

.play div {
  display: flex;
  align-items: center;
  justify-content: space-between;
  height: 13px;
}

.play svg {
  width: 12px;
  height: 10px;
}

.play input {
  width: 38px;
}

.nav {
  display: grid;
  grid-template-columns: repeat(4, 13px);
  padding-left: 1px;
}

.nav button {
  height: 13px;
}

.nav svg {
  width: 11px;
  height: 11px;
}

/* windows taskbar */
.taskbar {
  display: flex;
  align-items: center;
  height: 18px;
  background: linear-gradient(#4a8cf0, #245cdc 20%, #2460dc 85%, #1c48ac);
  color: #fff;
}

.start {
  gap: 4px;
  width: 54px;
  height: 100%;
  margin-right: 14px;
  border-radius: 0 5px 5px 0;
  background: linear-gradient(#6cbc68, #389038 25%, #348c34 80%, #246c24);
  font: italic 10px/12px "Noto Sans CJK SC", sans-serif;
}

.start svg {
  width: 11px;
  height: 11px;
}

.task {
  justify-content: flex-start;
  width: 88px;
  height: 15px;
  padding-left: 4px;
  border-radius: 2px;
  background: #3a7cf0;
}

.current {
  width: 88px;
  margin-right: 1px;
  background: #1c48b0;
  font-size: 6px;
}

.lang, .tray {
  display: flex;
  align-items: center;
}

.lang {
  gap: 1px;
  margin-left: auto;
}

.lang svg {
  width: 11px;
  height: 11px;
}

.tray {
  width: 60px;
  height: 100%;
  background: linear-gradient(#38a8f0, #1488e4 20%, #1490e8 85%, #1070c0);
}

.tray svg {
  width: 11px;
  height: 11px;
}

.tray span {
  margin-left: 3px;
}
```
